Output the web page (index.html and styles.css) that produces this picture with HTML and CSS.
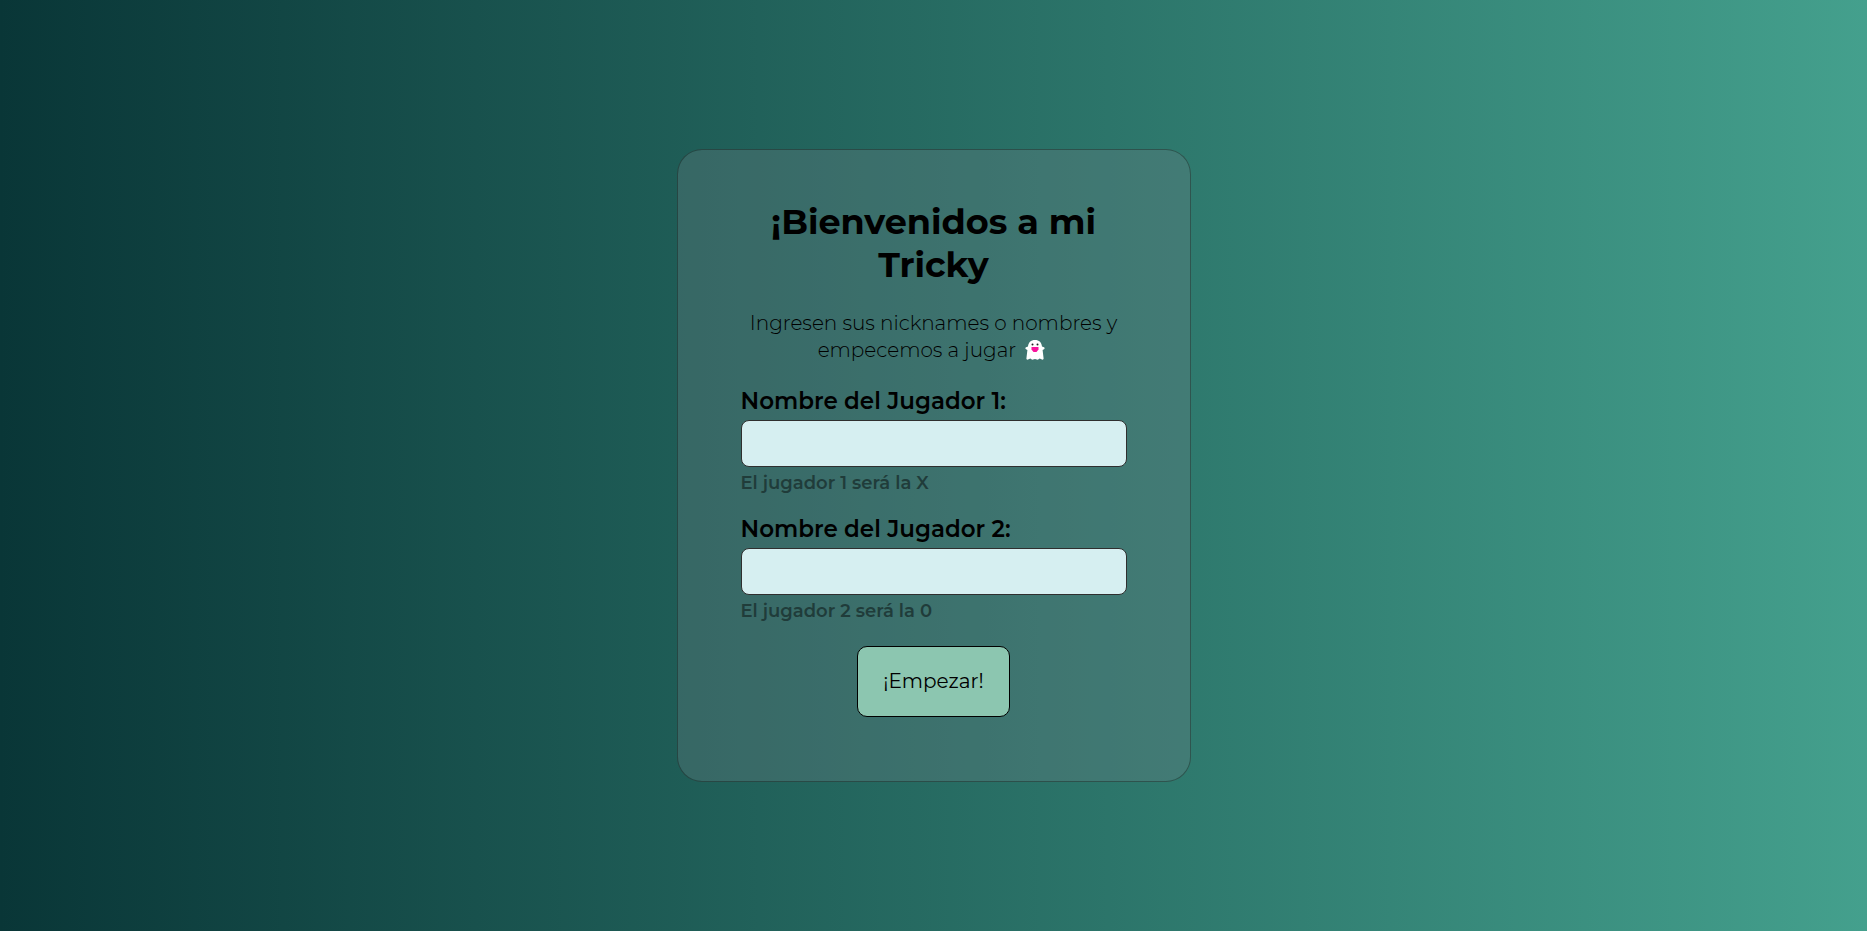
FILE: index.html
```html
<!DOCTYPE html>
<html lang="es">
<head>
<meta charset="utf-8">
<meta name="viewport" content="width=device-width, initial-scale=1">
<title>Tricky</title>
<link rel="stylesheet" href="styles.css">
</head>
<body>
<main class="card">
  <h1 class="title">¡Bienvenidos a mi Tricky</h1>
  <p class="intro">Ingresen sus nicknames o nombres y empecemos a jugar
    <svg class="ghost" viewBox="0 0 20 20" role="img" aria-label="Fantasma">
      <path fill="#fff" d="M10 0C5.8 0 3.200 2.700 3 6.600L1 7.200C.1 7.600 .2 8.800 1 9.200L2.400 10 1.400 18.500C1.300 19.700 2.600 20 3.600 19.200L5.300 18.600 7.200 19.800 10 19 12.800 19.800 14.700 18.600 16.400 19.200C17.400 20 18.700 19.700 18.600 18.500L17.600 10 19 9.200C19.800 8.800 19.900 7.600 19 7.200L17 6.600C16.800 2.700 14.200 0 10 0Z"/>
      <circle cx="7.500" cy="4.500" r="1" fill="#222"/>
      <circle cx="12.500" cy="4.500" r="1" fill="#222"/>
      <path fill="#f8149c" d="M6.500 7H13.500V9.500L11.500 12H8.500L6.500 9.500Z"/>
    </svg>
  </p>
  <form class="form">
    <div class="field">
      <label class="label" for="player1">Nombre del Jugador 1:</label>
      <input class="input" id="player1" type="text" aria-describedby="hint1">
      <small class="hint" id="hint1">El jugador 1 será la X</small>
    </div>
    <div class="field">
      <label class="label" for="player2">Nombre del Jugador 2:</label>
      <input class="input" id="player2" type="text" aria-describedby="hint2">
      <small class="hint" id="hint2">El jugador 2 será la 0</small>
    </div>
    <button class="start" type="submit">¡Empezar!</button>
  </form>
</main>
</body>
</html>
```
FILE: styles.css
```css
* {
  box-sizing: border-box;
}

body {
  margin: 0;
  min-height: 100vh;
  display: flex;
  align-items: center;
  justify-content: center;
  background: linear-gradient(to right, #093637, #44a08d);
  font-family: Montserrat, Inter, sans-serif;
  color: #000;
}

.card {
  width: 100%;
  max-width: 514px;
  padding: 50px 63px 64px;
  border: 1px solid rgba(47, 47, 47, 0.5);
  border-radius: 25px;
  background: rgba(114, 130, 136, 0.3);
  background-clip: padding-box;
}

.title {
  margin: 0 0 24px;
  font-size: 35px;
  line-height: 43px;
  font-weight: 700;
  text-align: center;
}

.intro {
  margin: 0 0 24px;
  font-size: 20px;
  line-height: 27px;
  font-weight: 300;
  text-align: center;
}

.ghost {
  width: 20px;
  height: 20px;
  margin: 0 4px;
  vertical-align: -3px;
}

.form {
  display: flex;
  flex-direction: column;
  gap: 23px;
}

.field {
  display: flex;
  flex-direction: column;
}

.label {
  margin-bottom: 5px;
  font-size: 23px;
  line-height: 27px;
  font-weight: 600;
}

.input {
  width: 100%;
  height: 47px;
  padding: 0 12px;
  border: 1px solid #2f2f2f;
  border-radius: 8px;
  background: #d6eff1;
  font: inherit;
  font-size: 20px;
}

.hint {
  margin-top: 6px;
  font-size: 18px;
  line-height: 20px;
  font-weight: 600;
  color: #203c3a;
}

.start {
  align-self: center;
  margin-top: 2px;
  padding: 22px 25px;
  border: 1px solid #000;
  border-radius: 10px;
  background: #8cc6b0;
  font: inherit;
  font-size: 20px;
  line-height: 25px;
  color: #000;
}
```
